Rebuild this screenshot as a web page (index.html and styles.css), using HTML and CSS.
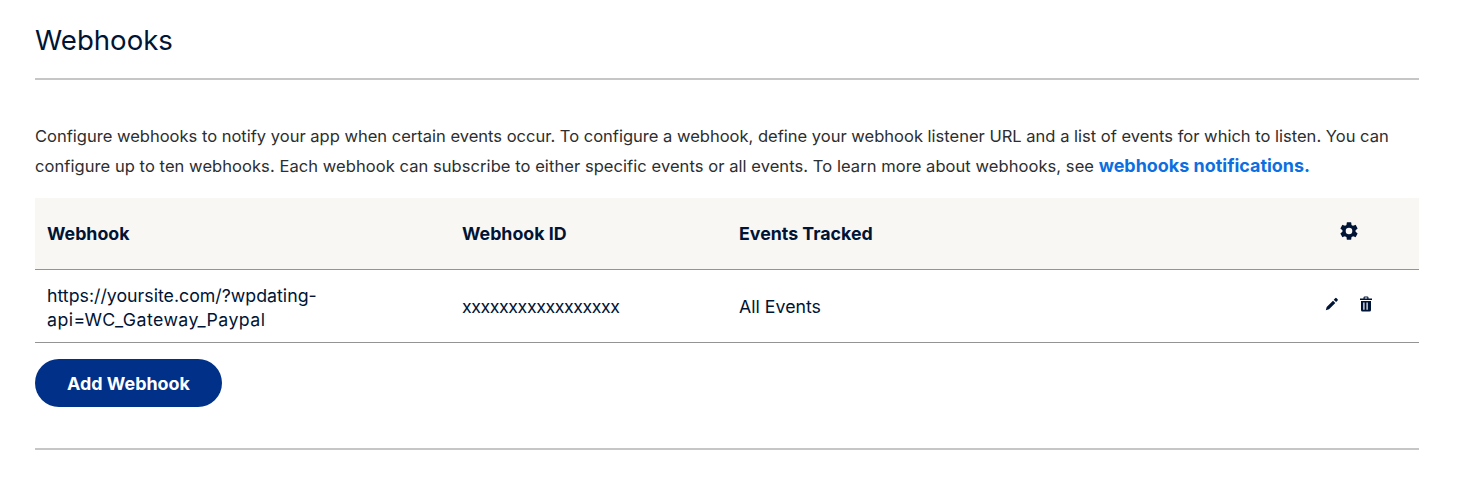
FILE: index.html
```html
<!DOCTYPE html>
<html lang="en">
<head>
<meta charset="utf-8">
<title>Webhooks</title>
<link rel="stylesheet" href="styles.css">
</head>
<body>
<main class="page">
  <h1 class="title">Webhooks</h1>
  <hr class="rule">
  <p class="intro">Configure webhooks to notify your app when certain events occur. To configure a webhook, define your webhook listener URL and a list of events for which to listen. You can <span class="intro-end">configure up to ten webhooks. Each webhook can subscribe to either specific events or all events. To learn more about webhooks, see</span> <a class="link" href="#">webhooks notifications.</a></p>
  <table class="table">
    <thead>
      <tr>
        <th class="col-url">Webhook</th>
        <th class="col-id">Webhook ID</th>
        <th class="col-events">Events Tracked</th>
        <th class="col-actions">
          <svg class="gear" viewBox="0 0 24 24" width="22" height="22" aria-hidden="true"><path fill="#001435" d="M19.14 12.94c.04-.3.06-.61.06-.94s-.02-.64-.07-.94l2.03-1.58a.49.49 0 0 0 .12-.61l-1.92-3.32a.49.49 0 0 0-.59-.22l-2.39.96a7 7 0 0 0-1.62-.94l-.36-2.54a.48.48 0 0 0-.48-.41h-3.84a.47.47 0 0 0-.47.41l-.36 2.54c-.59.24-1.13.57-1.62.94l-2.39-.96a.48.48 0 0 0-.59.22L2.74 8.87a.47.47 0 0 0 .12.61l2.03 1.58c-.05.3-.09.63-.09.94s.02.64.07.94l-2.03 1.58a.49.49 0 0 0-.12.61l1.92 3.32c.12.22.37.29.59.22l2.39-.96c.5.38 1.03.7 1.62.94l.36 2.54c.05.24.24.41.48.41h3.84c.24 0 .44-.17.47-.41l.36-2.54a7 7 0 0 0 1.62-.94l2.39.96c.22.08.47 0 .59-.22l1.92-3.32a.47.47 0 0 0-.12-.61l-2.01-1.58zM12 15.6a3.6 3.6 0 1 1 0-7.2 3.6 3.6 0 0 1 0 7.2z"/></svg>
        </th>
      </tr>
    </thead>
    <tbody>
      <tr>
        <td class="cell-url">https://yoursite.com/?wpdating-<br><span class="url-end">api=WC_Gateway_Paypal</span></td>
        <td class="cell-id">xxxxxxxxxxxxxxxxx</td>
        <td class="cell-events">All Events</td>
        <td class="cell-actions">
          <span class="actions">
            <svg viewBox="0 0 14 14" width="14" height="14" aria-hidden="true"><path fill="#001435" d="M.8 13.200l.9-3.200 6.300-6.300 2.300 2.300-6.300 6.300zM8.700 2.700l1.500-1.500a1 1 0 0 1 1.400 0l1 1a1 1 0 0 1 0 1.400l-1.500 1.500z"/></svg>
            <svg viewBox="0 0 14 16" width="14" height="16" aria-hidden="true"><path fill="#001435" fill-rule="evenodd" d="M4.500 1.500A1.200 1.200 0 0 1 5.700.5h2.600a1.200 1.200 0 0 1 1.200 1v1H13v1.500H1V2.500h3.500zm1.200.1v.9h2.600v-.9zM2 5h10v9a1.500 1.500 0 0 1-1.500 1.500h-7A1.500 1.500 0 0 1 2 14zm2.300 1.600v7.200h1.200V6.600zm3.200 0v7.200h1.200V6.600z"/></svg>
          </span>
        </td>
      </tr>
    </tbody>
  </table>
  <button class="add" type="button">Add Webhook</button>
  <hr class="rule rule-end">
</main>
</body>
</html>
```
FILE: styles.css
```css
* { box-sizing: border-box; }
html, body { margin: 0; background: #fff; }
body {
  font-family: Inter, "Liberation Sans", sans-serif;
  color: #001435;
}
.page {
  width: 1384px;
  margin-left: 35px;
  padding-top: 23px;
}
.title {
  margin: 0;
  font-size: 27.6px;
  line-height: 34px;
  font-weight: 400;
}
.rule {
  height: 2px;
  margin: 21px 0 0;
  border: 0;
  background: #c6c6c6;
}
.intro {
  margin: 41px 0 17px;
  font-size: 16.53px;
  line-height: 30px;
  color: #2c2e2f;
}
.intro-end { letter-spacing: 0.06px; }
.link {
  color: #0d6fdf;
  font-weight: 700;
  font-size: 17.95px;
  line-height: 1;
  text-decoration: none;
}
.table {
  width: 100%;
  border-collapse: collapse;
  table-layout: fixed;
  font-size: 17.75px;
}
.table th {
  height: 71px;
  padding: 0 12px;
  background: #f9f7f4;
  border-bottom: 1px solid #949494;
  text-align: left;
  font-weight: 700;
  font-size: 17.8px;
}
.table td {
  height: 73px;
  padding: 4px 12px 0;
  border-bottom: 1px solid #949494;
  line-height: 24px;
}
.table .cell-id { padding-top: 2px; letter-spacing: -0.42px; }
.table .cell-events { padding-top: 2px; }
.url-end { letter-spacing: 0.42px; }
.col-url { width: 415px; }
.col-id { width: 277px; }
.col-events { width: 566px; }
.col-actions svg { display: block; margin: 0 0 4px 33px; }
.actions { display: flex; gap: 20px; align-items: center; margin: 0 0 7px 20px; }
.actions svg { flex: none; }
.add {
  display: block;
  width: 187px;
  height: 48px;
  margin-top: 16px;
  padding: 2px 0 0;
  border: 0;
  border-radius: 24px;
  background: #003087;
  color: #fff;
  font: 700 17.9px Inter, "Liberation Sans", sans-serif;
}
.rule-end { margin-top: 41px; }
```
